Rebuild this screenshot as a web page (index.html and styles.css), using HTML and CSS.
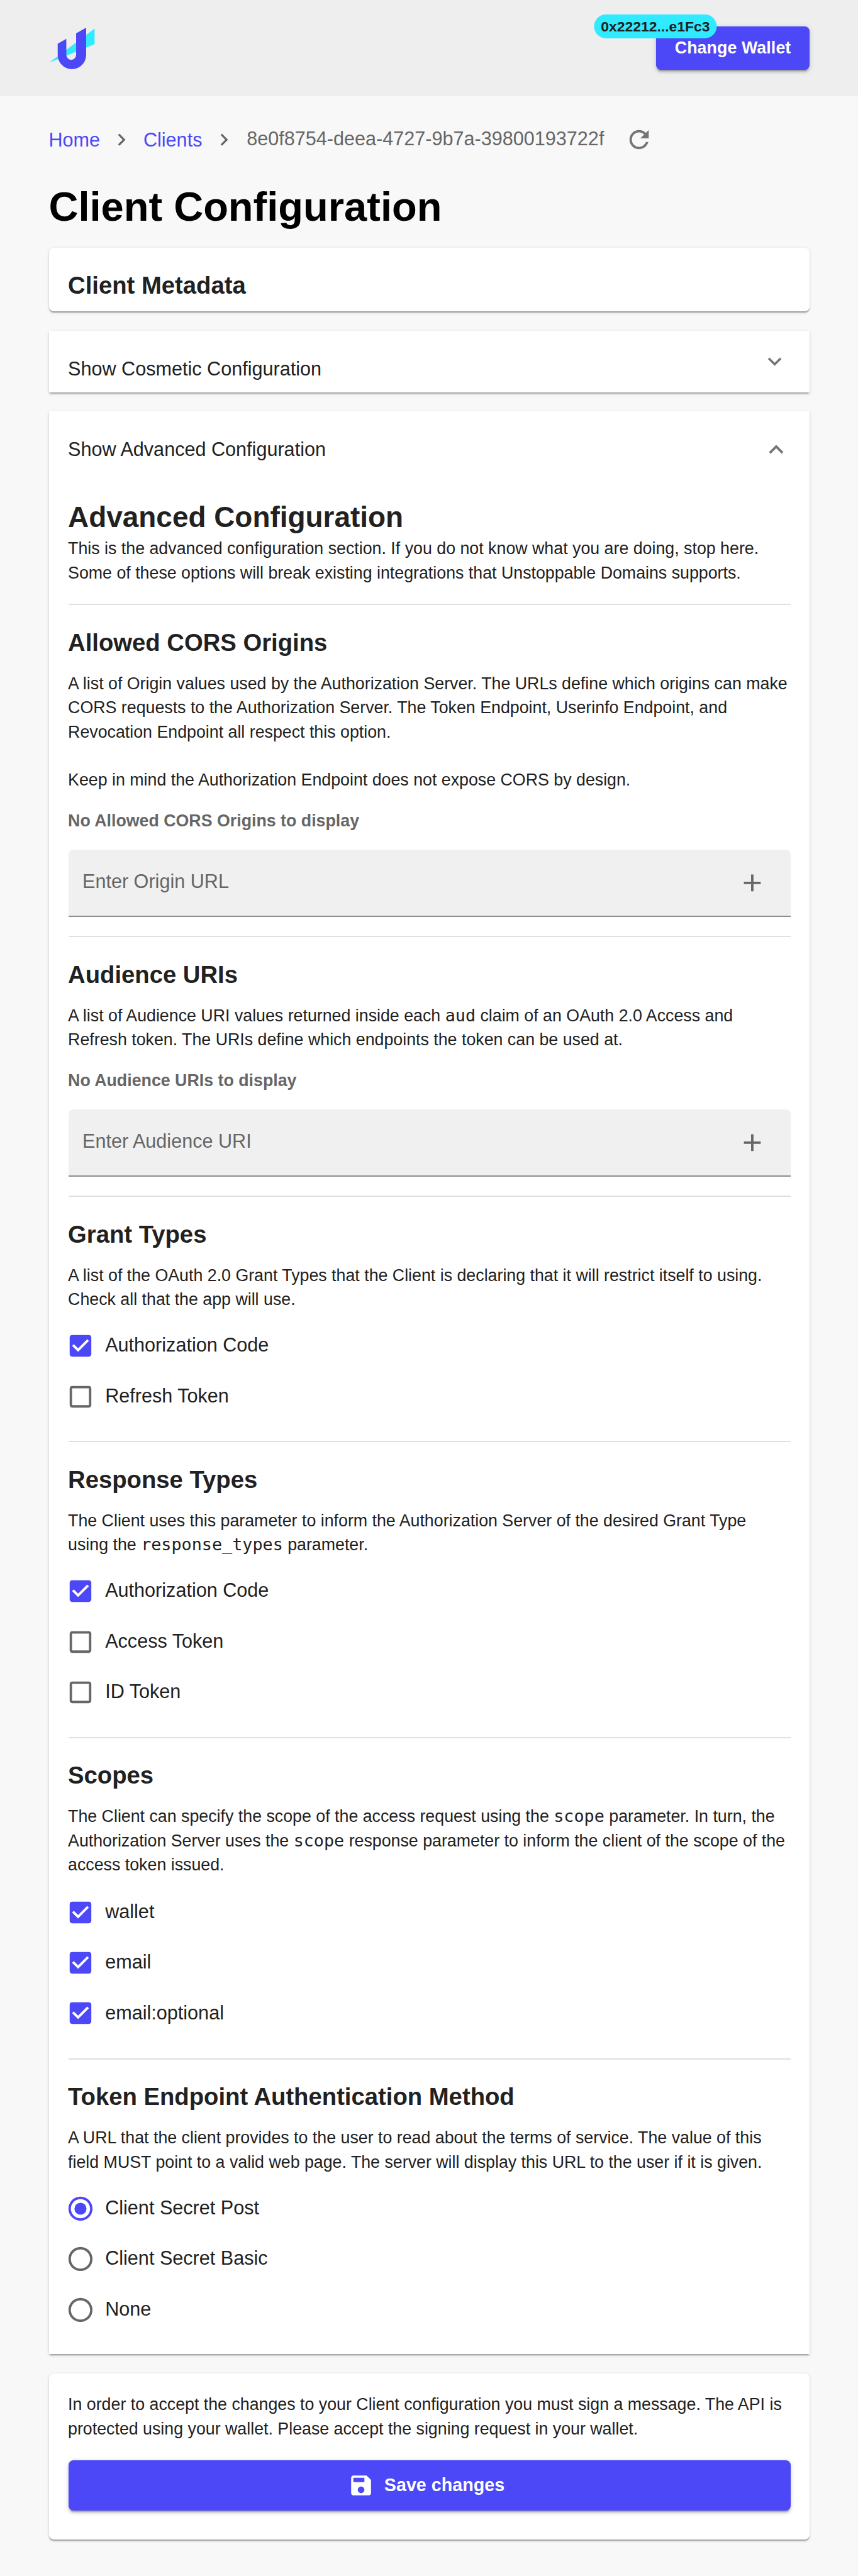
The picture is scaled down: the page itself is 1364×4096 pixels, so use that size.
FILE: index.html
```html
<!DOCTYPE html>
<html lang="en">
<head>
<meta charset="utf-8">
<title>Client Configuration</title>
<link rel="stylesheet" href="styles.css">
</head>
<body>
<svg class="sprite" aria-hidden="true">
  <symbol id="i-next" viewBox="0 0 24 24"><path d="M10 6 8.59 7.41 13.17 12l-4.58 4.59L10 18l6-6z"/></symbol>
  <symbol id="i-refresh" viewBox="0 0 24 24"><path d="M17.65 6.35C16.2 4.9 14.21 4 12 4c-4.42 0-7.99 3.58-7.99 8s3.57 8 7.99 8c3.73 0 6.84-2.55 7.73-6h-2.08c-.82 2.33-3.04 4-5.65 4-3.31 0-6-2.69-6-6s2.69-6 6-6c1.66 0 3.14.69 4.22 1.78L13 11h7V4l-2.35 2.35z"/></symbol>
  <symbol id="i-more" viewBox="0 0 24 24"><path d="M16.59 8.59 12 13.17 7.41 8.59 6 10l6 6 6-6z"/></symbol>
  <symbol id="i-less" viewBox="0 0 24 24"><path d="m12 8-6 6 1.41 1.41L12 10.83l4.59 4.58L18 14z"/></symbol>
  <symbol id="i-add" viewBox="0 0 24 24"><path d="M19 13h-6v6h-2v-6H5v-2h6V5h2v6h6v2z"/></symbol>
  <symbol id="i-checked" viewBox="0 0 24 24"><path d="M19 3H5c-1.11 0-2 .9-2 2v14c0 1.1.89 2 2 2h14c1.11 0 2-.9 2-2V5c0-1.1-.89-2-2-2zm-9 14-5-5 1.41-1.41L10 14.17l7.59-7.59L19 8l-9 9z"/></symbol>
  <symbol id="i-unchecked" viewBox="0 0 24 24"><path d="M19 5v14H5V5h14m0-2H5c-1.1 0-2 .9-2 2v14c0 1.1.9 2 2 2h14c1.1 0 2-.9 2-2V5c0-1.1-.9-2-2-2z"/></symbol>
  <symbol id="i-radio" viewBox="0 0 24 24"><path d="M12 2C6.48 2 2 6.48 2 12s4.48 10 10 10 10-4.48 10-10S17.52 2 12 2zm0 18c-4.42 0-8-3.58-8-8s3.58-8 8-8 8 3.58 8 8-3.58 8-8 8z"/></symbol>
  <symbol id="i-radio-on" viewBox="0 0 24 24"><path d="M12 2C6.48 2 2 6.48 2 12s4.48 10 10 10 10-4.48 10-10S17.52 2 12 2zm0 18c-4.42 0-8-3.58-8-8s3.58-8 8-8 8 3.58 8 8-3.58 8-8 8z"/><circle cx="12" cy="12" r="5"/></symbol>
  <symbol id="i-save" viewBox="0 0 24 24"><path d="M17 3H5c-1.11 0-2 .9-2 2v14c0 1.1.89 2 2 2h14c1.1 0 2-.9 2-2V7l-4-4zm-5 16c-1.66 0-3-1.34-3-3s1.34-3 3-3 3 1.34 3 3-1.34 3-3 3zm3-10H5V5h10v4z"/></symbol>
</svg>

<header class="topbar">
  <svg class="logo" viewBox="36 46 228 207">
    <path class="logo-wing" d="M36 221 263 51v77z"/>
    <path class="logo-u" d="M79 126l43-24v80a24.5 24.5 0 0 0 49 0V74l50-28v136a71 71 0 0 1-142 0z"/>
  </svg>
  <div class="wallet">
    <button class="btn" type="button">Change Wallet</button>
    <span class="badge">0x22212...e1Fc3</span>
  </div>
</header>

<main class="page">
  <nav class="crumbs">
    <a class="crumb-link" href="#">Home</a>
    <svg class="sep"><use href="#i-next"/></svg>
    <a class="crumb-link" href="#">Clients</a>
    <svg class="sep"><use href="#i-next"/></svg>
    <span class="crumb-id">8e0f8754-deea-4727-9b7a-39800193722f</span>
    <svg class="icon refresh"><use href="#i-refresh"/></svg>
  </nav>
  <h1 class="title">Client Configuration</h1>

  <section class="card metadata"><h3 class="heading">Client Metadata</h3></section>

  <section class="card square cosmetic">
    <span class="toggle-label">Show Cosmetic Configuration</span>
    <svg class="toggle-down"><use href="#i-more"/></svg>
  </section>

  <section class="card square advanced">
    <div class="toggle">
      <span class="toggle-label">Show Advanced Configuration</span>
      <svg class="icon toggle-up"><use href="#i-less"/></svg>
    </div>
    <h2 class="subtitle">Advanced Configuration</h2>
    <p class="text">This is the advanced configuration section. If you do not know what you are doing, stop here. Some of these options will break existing integrations that Unstoppable Domains supports.</p>

    <div class="section">
      <h3 class="heading">Allowed CORS Origins</h3>
      <p class="text">A list of Origin values used by the Authorization Server. The URLs define which origins can make CORS requests to the Authorization Server. The Token Endpoint, Userinfo Endpoint, and Revocation Endpoint all respect this option.<br><br>Keep in mind the Authorization Endpoint does not expose CORS by design.</p>
      <p class="text empty">No Allowed CORS Origins to display</p>
      <div class="field"><span class="field-label">Enter Origin URL</span><svg class="icon"><use href="#i-add"/></svg></div>
    </div>

    <div class="section">
      <h3 class="heading">Audience URIs</h3>
      <p class="text">A list of Audience URI values returned inside each <code>aud</code> claim of an OAuth 2.0 Access and Refresh token. The URIs define which endpoints the token can be used at.</p>
      <p class="text empty">No Audience URIs to display</p>
      <div class="field"><span class="field-label">Enter Audience URI</span><svg class="icon"><use href="#i-add"/></svg></div>
    </div>

    <div class="section">
      <h3 class="heading">Grant Types</h3>
      <p class="text">A list of the OAuth 2.0 Grant Types that the Client is declaring that it will restrict itself to using. Check all that the app will use.</p>
      <div class="options">
        <label class="option on"><svg class="icon"><use href="#i-checked"/></svg><span>Authorization Code</span></label>
        <label class="option"><svg class="icon"><use href="#i-unchecked"/></svg><span>Refresh Token</span></label>
      </div>
    </div>

    <div class="section">
      <h3 class="heading">Response Types</h3>
      <p class="text">The Client uses this parameter to inform the Authorization Server of the desired Grant Type using the <code>response_types</code> parameter.</p>
      <div class="options">
        <label class="option on"><svg class="icon"><use href="#i-checked"/></svg><span>Authorization Code</span></label>
        <label class="option"><svg class="icon"><use href="#i-unchecked"/></svg><span>Access Token</span></label>
        <label class="option"><svg class="icon"><use href="#i-unchecked"/></svg><span>ID Token</span></label>
      </div>
    </div>

    <div class="section">
      <h3 class="heading">Scopes</h3>
      <p class="text">The Client can specify the scope of the access request using the <code>scope</code> parameter. In turn, the Authorization Server uses the <code>scope</code> response parameter to inform the client of the scope of the access token issued.</p>
      <div class="options scopes">
        <label class="option on"><svg class="icon"><use href="#i-checked"/></svg><span>wallet</span></label>
        <label class="option on"><svg class="icon"><use href="#i-checked"/></svg><span>email</span></label>
        <label class="option on"><svg class="icon"><use href="#i-checked"/></svg><span>email:optional</span></label>
      </div>
    </div>

    <div class="section">
      <h3 class="heading">Token Endpoint Authentication Method</h3>
      <p class="text">A URL that the client provides to the user to read about the terms of service. The value of this field MUST point to a valid web page. The server will display this URL to the user if it is given.</p>
      <div class="options">
        <label class="option on"><svg class="icon"><use href="#i-radio-on"/></svg><span>Client Secret Post</span></label>
        <label class="option"><svg class="icon"><use href="#i-radio"/></svg><span>Client Secret Basic</span></label>
        <label class="option"><svg class="icon"><use href="#i-radio"/></svg><span>None</span></label>
      </div>
    </div>
  </section>

  <section class="card save">
    <p class="text">In order to accept the changes to your Client configuration you must sign a message. The API is protected using your wallet. Please accept the signing request in your wallet.</p>
    <button class="btn btn-large" type="button"><svg class="save-icon"><use href="#i-save"/></svg>Save changes</button>
  </section>
</main>
</body>
</html>
```
FILE: styles.css
```css
/* 1rem = 10 layout units; the layout is 713 units wide */
html { font-size: 19.13px; }
* { box-sizing: border-box; margin: 0; padding: 0; }

body {
  background: #f8f8f8;
  color: #212121;
  font-family: "Liberation Sans", Arial, sans-serif;
  font-size: 1.6rem;
  line-height: 2.4rem;
  height: 4096px;
  overflow: hidden;
}

svg { display: block; flex: none; fill: currentColor; }
.sprite { display: none; }
.icon { width: 2.4rem; height: 2.4rem; }

/* Header */
.topbar {
  display: flex;
  align-items: center;
  justify-content: space-between;
  height: 8rem;
  padding: 0 4rem 0 4.1rem;
  background: #eee;
}
.logo { width: 3.8rem; height: 3.45rem; }
.logo-wing { fill: #30eaff; }
.logo-u { fill: #4c47f7; }

.wallet { position: relative; }
.btn {
  display: flex;
  align-items: center;
  justify-content: center;
  width: 12.8rem;
  height: 3.6rem;
  border: 0;
  border-radius: .4rem;
  background: #4c47f7;
  color: #fff;
  font: bold 1.4rem/2.4rem "Liberation Sans", Arial, sans-serif;
  letter-spacing: .005rem;
  white-space: nowrap;
  box-shadow: 0 .3rem .1rem -.2rem rgba(0,0,0,.2), 0 .2rem .2rem rgba(0,0,0,.14), 0 .1rem .5rem rgba(0,0,0,.12);
}
.badge {
  position: absolute;
  top: 0;
  left: -.04rem;
  transform: translate(-50%, -50%);
  width: 10.2rem;
  height: 2rem;
  border-radius: 1rem;
  background: #30eaff;
  font-size: 1.2rem;
  font-weight: bold;
  line-height: 2rem;
  text-align: center;
  white-space: nowrap;
}

/* Page */
.page { padding: 1.6rem 4rem 3rem 4.1rem; }
.crumbs { display: flex; align-items: center; height: 4rem; margin-left: -.05rem; color: #666; }
.crumb-link { padding-top: .09rem; color: #4c47f7; text-decoration: none; }
.crumb-id { margin-left: .1rem; padding-bottom: .11rem; }
.sep { width: 2rem; height: 2rem; margin: 0 .8rem; }
.refresh { margin-left: 1.68rem; color: #757575; }
.title {
  margin: 1.52rem 0 1.28rem -.05rem;
  color: #000;
  font-size: 3.4rem;
  line-height: 4.2rem;
}

/* Cards */
.card {
  margin-bottom: 1.6rem;
  padding: 0 1.6rem;
  border-radius: .4rem;
  background: #fff;
  box-shadow: 0 .2rem .1rem -.1rem rgba(0,0,0,.2), 0 .1rem .1rem rgba(0,0,0,.14), 0 .1rem .3rem rgba(0,0,0,.12);
}
.square { border-radius: 0; }
.metadata { height: 5.3rem; padding-top: 1.52rem; }
.cosmetic { display: flex; justify-content: space-between; height: 5.1rem; }
.toggle-label { margin-left: -.05rem; }
.cosmetic .toggle-label { padding-top: 2rem; }
.toggle-down { width: 2.26rem; height: 2.26rem; margin: 1.41rem .2rem 0 0; color: #757575; filter: blur(.6px); }
.toggle { display: flex; justify-content: space-between; height: 7.19rem; }
.toggle .toggle-label { padding-top: 1.97rem; }
.toggle-up { margin-top: 2rem; color: #757575; }

/* Typography */
.heading, .subtitle, .text { margin-left: -.05rem; }
.heading { font-size: 2rem; line-height: 3.2rem; }
.subtitle { margin-bottom: .03rem; font-size: 2.4rem; line-height: 3.2rem; }
.text { font-size: 1.4rem; line-height: 2.002rem; }
.text code { font-family: "DejaVu Sans Mono", monospace; font-size: 1.4rem; line-height: 1; }

/* Configuration sections */
.advanced { padding-bottom: 1.6rem; }
.section { margin-top: 1.59rem; padding-top: 1.5rem; border-top: 2px solid #e0e0e0; }
.section .heading { margin-bottom: .82rem; }
.empty { margin-top: 1.4rem; margin-bottom: 1.37rem; color: #666; font-weight: bold; }
.field {
  display: flex;
  align-items: center;
  justify-content: space-between;
  height: 5.6rem;
  padding: 0 2rem 0 1.15rem;
  border-bottom: 2px solid #8c8c8c;
  border-radius: .4rem .4rem 0 0;
  background: #f0f0f0;
  color: #666;
}
.field .icon { margin-top: .1rem; }
.field-label { padding-bottom: .2rem; }
.options { margin-top: .77rem; }
.scopes { margin: .86rem 0 1.63rem; }
.option { display: flex; align-items: center; gap: .84rem; height: 4.2rem; margin-left: -.2rem; }
.option .icon { color: #666; }
.option.on .icon { color: #4c47f7; }
.option span { padding-bottom: .1rem; }

/* Save panel */
.save { height: 13.83rem; margin-bottom: 0; padding-top: 1.6rem; }
.btn-large { width: 100%; height: 4.2rem; margin-top: 1.6rem; padding-right: .54rem; font-size: 1.5rem; letter-spacing: 0; }
.save-icon { width: 2.2rem; height: 2.2rem; margin-right: .8rem; }
```
